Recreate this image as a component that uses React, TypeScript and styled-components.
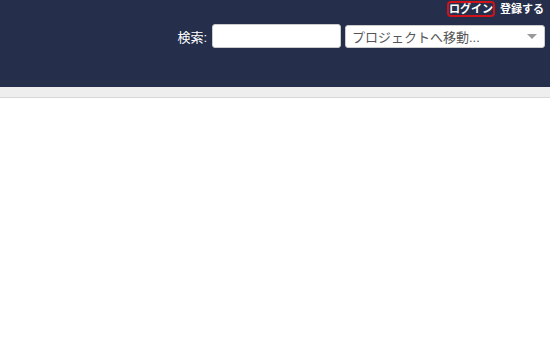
import * as React from 'react';
import styled, { createGlobalStyle } from 'styled-components';

const GlobalStyle = createGlobalStyle`
  html, body {
    margin: 0;
    padding: 0;
    background: #ffffff;
    font-family: "Liberation Sans", "Noto Sans CJK JP", sans-serif;
  }
`;

const Page = styled.div`
  width: 550px;
  height: 350px;
  background: #ffffff;
`;

const Header = styled.header`
  height: 87px;
  background: #252e4b;
  display: flex;
  flex-direction: column;
  align-items: flex-end;
  padding-right: 4px;
  box-sizing: border-box;
`;

const TopMenu = styled.nav`
  display: flex;
  align-items: center;
  gap: 3px;
  height: 17px;
  margin-right: 0;
`;

const MenuLink = styled.a<{ $focused?: boolean }>`
  color: #ffffff;
  font-size: 11px;
  font-weight: bold;
  text-decoration: none;
  line-height: 12px;
  padding: 0;
  border-radius: 4px;
  border: 2px solid ${(p) => (p.$focused ? '#d0121b' : 'transparent')};
`;

const QuickSearch = styled.div`
  display: flex;
  align-items: center;
  margin-top: 7px;
  padding-right: 1px;
`;

const Label = styled.label`
  color: #ffffff;
  font-size: 13px;
  margin-right: 5px;
`;

const SearchInput = styled.input`
  width: 129px;
  height: 24px;
  box-sizing: border-box;
  border: 1px solid #cccccc;
  border-radius: 3px;
  background: #ffffff;
  margin-right: 4px;
`;

const Jump = styled.div`
  width: 200px;
  height: 23px;
  box-sizing: border-box;
  background: #ffffff;
  border: 1px solid #cccccc;
  border-radius: 3px;
  display: flex;
  align-items: center;
  justify-content: space-between;
  padding: 0 7px 0 6px;
  color: #555555;
  font-size: 13px;
`;

const Arrow = styled.span`
  width: 0;
  height: 0;
  border-left: 5px solid transparent;
  border-right: 5px solid transparent;
  border-top: 5px solid #999999;
`;

const MainMenu = styled.div`
  height: 10px;
  background: #eeeeee;
  border-bottom: 1px solid #d7d7d7;
`;

export default function App() {
  return (
    <Page>
      <GlobalStyle />
      <Header>
        <TopMenu>
          <MenuLink href="#" $focused>
            ログイン
          </MenuLink>
          <MenuLink href="#">登録する</MenuLink>
        </TopMenu>
        <QuickSearch>
          <Label>検索:</Label>
          <SearchInput type="text" />
          <Jump>
            <span>プロジェクトへ移動...</span>
            <Arrow />
          </Jump>
        </QuickSearch>
      </Header>
      <MainMenu />
    </Page>
  );
}
